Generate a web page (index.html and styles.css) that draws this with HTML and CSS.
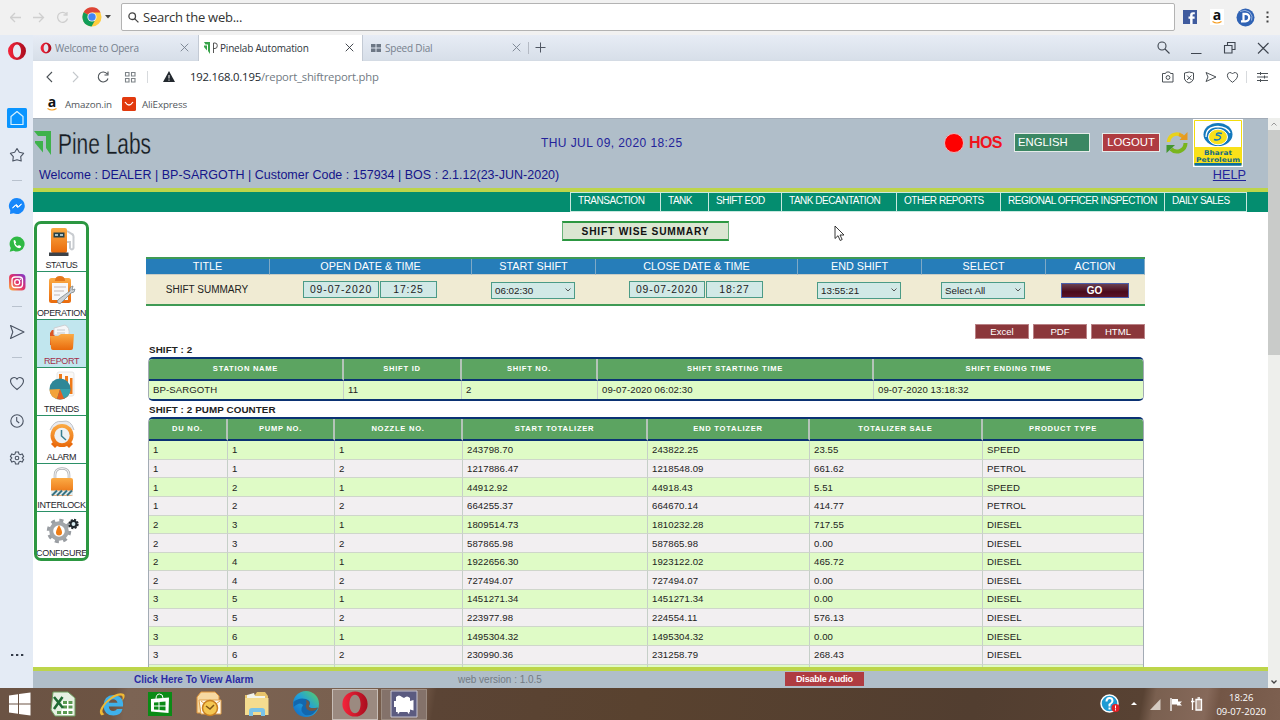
FILE: index.html
```html
<!DOCTYPE html>
<html lang="en">
<head>
    <meta charset="utf-8">
    <title>Pinelab Automation</title>
    <link rel="stylesheet" href="styles.css">
</head>
<body>
    <svg class="defs" width="0" height="0">
        <defs>
            <linearGradient id="orange" x1="0" y1="0" x2="0" y2="1">
                <stop offset="0" stop-color="#fbab45"/><stop offset="1" stop-color="#e96a0c"/>
            </linearGradient>
            <linearGradient id="insta" x1="0" y1="1" x2="1" y2="0">
                <stop offset="0" stop-color="#fdb83c"/><stop offset=".5" stop-color="#e1306c"/><stop offset="1" stop-color="#7a3bd0"/>
            </linearGradient>
            <linearGradient id="edgeGrad" x1="0" y1="1" x2="1" y2="0">
                <stop offset="0" stop-color="#1265c0"/><stop offset=".5" stop-color="#1f9fdc"/><stop offset="1" stop-color="#5fd35f"/>
            </linearGradient>
            <linearGradient id="operaGrad" x1="0" y1="0" x2="1" y2="0">
                <stop offset="0" stop-color="#f5253b"/><stop offset="1" stop-color="#a90d1e"/>
            </linearGradient>
        </defs>
        <symbol id="opera" viewBox="0 0 20 20">
            <path fill="url(#operaGrad)" fill-rule="evenodd" d="M10 1a9 9 0 1 0 0 18a9 9 0 1 0 0-18zM10 3.400c2.400 0 4 3 4 6.600s-1.600 6.600-4 6.600s-4-3-4-6.600s1.600-6.600 4-6.600z"/>
        </symbol>
        <symbol id="close" viewBox="0 0 10 10"><path d="M.8 .8l8.400 8.400M9.200 .8l-8.400 8.400" fill="none" stroke="currentColor"/></symbol>
        <symbol id="heart" viewBox="0 0 20 20"><path d="M10 16.500C6 13.500 3.500 11 3.500 8A3.500 3.500 0 0 1 10 6.300A3.500 3.500 0 0 1 16.500 8C16.500 11 14 13.500 10 16.500z" fill="none" stroke="currentColor" stroke-width="1.100"/></symbol>
        <symbol id="send" viewBox="0 0 20 20"><path d="M3.500 3.500L17 10L3.500 16.500L5.800 10z" fill="none" stroke="currentColor" stroke-width="1.100" stroke-linejoin="round"/></symbol>
    </svg>

    <!-- search bar -->
    <div class="search-bar">
        <svg class="history-icons" width="66" height="17" viewBox="0 0 66 17" fill="none" stroke="#cfcfcf" stroke-width="1.300">
            <path d="M11 8.500H0.500M5 4L.5 8.500L5 13M23 8.500h10.500M29 4l4.500 4.500L29 13M56.800 5.500A5 5 0 1 0 57.500 9.500M57 3v3h-3.500"/>
        </svg>
        <svg class="chrome-icon" width="20" height="20" viewBox="0 0 20 20">
            <circle cx="10" cy="10" r="9.500" fill="#ffcd40"/>
            <path d="M10 10L1.600 5.300A9.600 9.600 0 0 1 18.600 5.500H10z" fill="#dd4437"/>
            <path d="M10 10L1.600 5.300A9.500 9.500 0 0 0 9.500 19.500L13.500 12.500z" fill="#109d58"/>
            <circle cx="10" cy="10" r="4.600" fill="#f5f5f5"/><circle cx="10" cy="10" r="3.700" fill="#4285f4"/>
        </svg>
        <svg class="caret" width="6" height="4" viewBox="0 0 6 4"><path d="M0 0h6L3 3.500z" fill="#444"/></svg>
        <div class="search-box">
            <svg width="11" height="11" viewBox="0 0 11 11" fill="none" stroke="#444" stroke-width="1.300"><circle cx="4.200" cy="4.200" r="3.300"/><path d="M6.600 6.600l3.800 3.800"/></svg>
            <span>Search the web...</span>
        </div>
        <svg class="fb-icon" width="14" height="14" viewBox="0 0 14 14"><path d="M0 0h14v14H0z" fill="#3f5b9e"/><path d="M9.600 14V8.700h2V6.500h-2V5.300c0-.8.300-1.100 1.200-1.100h1V2.200H10C8 2.200 7.100 3.300 7.100 5v1.500H5.500v2.200h1.600V14z" fill="#fff"/></svg>
        <div class="amazon amazon-top">a<svg width="10" height="3" viewBox="0 0 10 3"><path d="M.5 .5Q5 3.500 9.500 .5" fill="none" stroke="#f79c1d" stroke-width="1.100"/></svg></div>
        <svg class="d-icon" width="19" height="19" viewBox="0 0 19 19"><circle cx="9.500" cy="9.500" r="9" fill="#2f62b4"/><path d="M4 3.500Q9 1 13.500 4Q17.500 8 15.500 12.500" fill="none" stroke="#dbe7f8" stroke-width=".6"/><path d="M7.500 5.800h2a3.700 3.700 0 0 1 0 7.500h-2zM5 13.300h4" fill="none" stroke="#fff" stroke-width="2.200"/></svg>
        <svg class="dots-v" width="3" height="12" viewBox="0 0 3 12"><path d="M.5 .5h2v2h-2zM.5 5h2v2h-2zM.5 9.500h2v2h-2z" fill="#444"/></svg>
    </div>

    <div class="opera-window">
        <!-- opera sidebar -->
        <div class="opera-side">
            <svg class="side-opera" viewBox="0 0 20 20"><use href="#opera"/></svg>
            <svg class="side-home" viewBox="0 0 20 20"><rect width="20" height="20" rx="1.500" fill="#0a95ff"/><path d="M4 8.500L10 3.500L16 8.500V16.500H4z" fill="none" stroke="#d8f2ff" stroke-width="1.200" stroke-linejoin="round"/></svg>
            <svg class="side-star" viewBox="0 0 20 20"><path d="M10 3.500L12.300 7.300L16.600 8.300L13.700 11.700L14.200 16L10 14.800L5.800 16L6.300 11.700L3.400 8.300L7.700 7.300z" fill="none" stroke="#4b5463" stroke-width="1.100" stroke-linejoin="round"/></svg>
            <i></i>
            <svg viewBox="0 0 20 20"><path d="M10 2a8 8 0 1 1-3.500 15.300L3 18l.3-3.500A8 8 0 0 1 10 2z" fill="#1687fb"/><path d="M5.500 12l3.500-3.500l2.500 2L14.500 8L11 11.500l-2.500-2z" fill="#fff" stroke="#fff"/></svg>
            <svg class="gap" viewBox="0 0 20 20"><path d="M10.200 2.500a7.500 7.500 0 1 1-3.500 14.200L2.700 17.700L3.800 14A7.500 7.500 0 0 1 10.200 2.500z" fill="#2fb944"/><path d="M6.500 6.500l1.500-.5l1.200 2.500l-1 1q1 2 2.700 2.600l1-1l2.300 1.200q-.2 2-2 2Q7.200 13.800 6.500 6.500z" fill="#fff"/></svg>
            <svg class="gap" viewBox="0 0 20 20"><rect x="2" y="2" width="16.500" height="16.500" rx="4" fill="url(#insta)"/><rect x="5" y="5" width="10.500" height="10.500" rx="3" fill="none" stroke="#fff" stroke-width="1.300"/><circle cx="10.200" cy="10.200" r="2.500" fill="none" stroke="#fff" stroke-width="1.300"/><circle cx="13.300" cy="7.200" r=".7" fill="#fff"/></svg>
            <i class="tight"></i>
            <svg viewBox="0 0 20 20"><use href="#send"/></svg>
            <i></i>
            <svg viewBox="0 0 20 20"><use href="#heart"/></svg>
            <svg class="gap" viewBox="0 0 20 20" fill="none" stroke="currentColor" stroke-width="1.100"><circle cx="10" cy="10" r="6.200"/><path d="M9.700 6v4l2.500 2"/></svg>
            <svg class="gap side-gear" viewBox="0 0 20 20" fill="none" stroke="currentColor" stroke-width="1.100"><path d="M8.500 4h3l.4 1.900l1.400.8l1.900-.7l1.400 2.500L15.200 10l1.400 1.500l-1.400 2.500l-1.900-.7l-1.400.8l-.4 1.900h-3l-.4-1.900l-1.400-.8l-1.900.7l-1.400-2.500L4.800 10L3.400 8.500L4.800 6l1.900.7l1.400-.8z"/><circle cx="10" cy="10" r="1.800"/></svg>
            <svg class="side-more" viewBox="0 0 20 20"><path d="M4 9h2.300v2H4zM9 9h2.300v2H9zM14 9h2.300v2H14z" fill="#333b48"/></svg>
        </div>

        <div class="opera-main">
            <div class="tabs">
                <div class="tab tab-first">
                    <svg width="12" height="12"><use href="#opera"/></svg>
                    <span>Welcome to Opera</span>
                    <svg class="tab-close" width="9" height="9"><use href="#close"/></svg>
                </div>
                <div class="tab tab-active">
                    <svg width="14" height="12" viewBox="0 0 14 12"><path d="M0 0h6v12L4 9V2.500H1.500z" fill="#38a34a"/><path d="M0 3.500h3v5L0 5z" fill="#38a34a"/><path d="M9.500 11V1h1.500q2.300 0 2.300 2.700T11 6.500H9.500" fill="none" stroke="#444" stroke-width=".9"/></svg>
                    <span>Pinelab Automation</span>
                    <svg class="tab-close" width="9" height="9"><use href="#close"/></svg>
                </div>
                <div class="tab tab-speed">
                    <svg width="10" height="8" viewBox="0 0 10 8"><path d="M0 0h4.500v3.500H0zM5.500 0H10v3.500H5.500zM0 4.500h4.500V8H0zM5.500 4.500H10V8H5.500z" fill="#6d7785"/></svg>
                    <span>Speed Dial</span>
                    <svg class="tab-close" width="9" height="9"><use href="#close"/></svg>
                </div>
                <div class="new-tab"><svg width="11" height="11" viewBox="0 0 11 11"><path d="M5.500 .5v10M.5 5.500h10" stroke="#505763"/></svg></div>
                <svg class="window-icons" width="112" height="14" viewBox="0 0 112 14" fill="none" stroke="#3f4650" stroke-width="1.100">
                    <circle cx="5" cy="5" r="4"/><path d="M8 8l4.500 4.500M34 12.500h10.500M70.500 4.500V1.500h7.500v7h-3M67.500 4.500h7.500v7.500h-7.500zM101 2l10.500 10.500M111.500 2L101 12.500"/>
                </svg>
            </div>

            <div class="address">
                <svg class="nav-icons" width="90" height="16" viewBox="0 0 90 16" fill="none" stroke="#4b5156" stroke-width="1.100">
                    <path d="M6 3L1 8l5 5"/><path d="M27 3l5 5l-5 5" stroke="#c4c8cc"/>
                    <path d="M61.300 5A5 5 0 1 0 62 9.500M62 2.500V6h-3.500"/>
                    <path d="M79.500 3.500h3.500v3.500h-3.500zM85.500 3.500h3.500v3.500h-3.500zM79.500 9.500h3.500v3.500h-3.500zM85.500 9.500h3.500v3.500h-3.500z" stroke="#7d8388"/>
                </svg>
                <i class="sep"></i>
                <svg class="warn" width="12" height="11" viewBox="0 0 12 11"><path d="M6 0L12 11H0z" fill="#22282e"/><path d="M6 4v3.500M6 8.500v1.200" stroke="#fff"/></svg>
                <span class="url">192.168.0.195<b>/report_shiftreport.php</b></span>
                <svg class="address-icons" width="78" height="14" viewBox="0 0 78 14" fill="none" stroke="#4b5156">
                    <path d="M.5 3.500h3l1-1.500h3l1 1.500h2.500v8.500H.5z"/><circle cx="6" cy="7.500" r="1.900"/>
                    <path d="M22.500 3q5-2 9 0v6q-1 3-4.500 4q-3.500-1-4.500-4zM25 5.500l4.500 4.500M29.500 5.500L25 10"/>
                    <path d="M44 2.500L54 7L44 11.500L46 7z"/>
                    <path d="M70.500 12.300C67 9.800 65.400 7.800 65.400 5.300A2.700 2.700 0 0 1 70.500 4A2.700 2.700 0 0 1 75.600 5.300C75.600 7.800 74 9.800 70.500 12.300z"/>
                </svg>
                <i class="sep sep-right"></i>
                <svg class="easy-setup" width="11" height="10" viewBox="0 0 11 10" stroke="#4b5156"><path d="M0 1.500h11M0 5h11M0 8.500h11M3.500 0v3M7.500 3.500v3M3.500 7v3"/></svg>
            </div>

            <div class="bookmarks">
                <div class="amazon">a<svg width="10" height="3" viewBox="0 0 10 3"><path d="M.5 .5Q5 3.500 9.500 .5" fill="none" stroke="#f79c1d" stroke-width="1.100"/></svg></div>
                <span>Amazon.in</span>
                <svg class="bm-ali" width="14" height="14" viewBox="0 0 14 14"><rect width="14" height="14" rx="1.500" fill="#e23a0e"/><path d="M3 5Q7 11 11 5" fill="none" stroke="#fff" stroke-width="1.300"/></svg>
                <span>AliExpress</span>
            </div>

            <div class="viewport">
                <div class="page">
                    <div class="header">
                        <div class="header-top">
                            <svg class="logo" width="124" height="40" viewBox="0 0 124 40">
                                <path d="M0 6h17v24l-5-7V11H4z" fill="#3eb24b"/><path d="M1 16h8v11.500L1 18z" fill="#3eb24b"/>
                                <text x="24" y="29" font-family="Liberation Sans" font-size="30" fill="#161c22" stroke="#b0bec9" stroke-width=".3" textLength="93" lengthAdjust="spacingAndGlyphs">Pine Labs</text>
                            </svg>
                            <span class="date">THU JUL 09, 2020 18:25</span>
                            <span class="hos-dot"></span>
                            <span class="hos">HOS</span>
                            <span class="language">ENGLISH</span>
                            <span class="logout">LOGOUT</span>
                            <svg class="refresh" width="22" height="23" viewBox="0 0 22 23" fill="none">
                                <path d="M2.500 11A8.500 8.500 0 0 1 14 3.500" stroke="#e8d21c" stroke-width="3.500"/><path d="M13 3.500a8 8 0 0 1 5 3.500" stroke="#e9a31d" stroke-width="3.500"/><path d="M21.500 1v8h-8z" fill="#e59a22"/>
                                <path d="M19.500 12A8.500 8.500 0 0 1 5 18" stroke="#79b51d" stroke-width="4"/><path d="M.5 22v-8h8.500z" fill="#43962f"/>
                            </svg>
                            <svg class="bp-logo" width="50" height="48" viewBox="0 0 50 48">
                                <path d="M0 0h50v48H0z" fill="#fff"/><path d="M1.500 1.500h47v44h-47z" fill="#fff" stroke="#f2dc0c"/>
                                <path d="M1.500 28h47v16h-47z" fill="#f9e11a"/><path d="M1.500 44h47v2.800h-47z" fill="#0b6f9b"/>
                                <ellipse cx="25" cy="15.500" rx="14.500" ry="11.500" fill="#1479bd"/>
                                <path d="M13 18Q13 8 25 7.500Q34 8 37 14" fill="none" stroke="#fff" stroke-width="1.300"/>
                                <ellipse cx="25" cy="18" rx="9.500" ry="7.800" fill="#f9e11a" stroke="#fff"/>
                                <path d="M29 14.500q-6-1.500-5.500 1.500q4.500 .5 4 3q-1.500 3-6.500 1.500" fill="none" stroke="#1479bd" stroke-width="1.500"/>
                                <text x="11" y="35.500" font-family="DejaVu Sans" font-size="6.500" font-weight="bold" fill="#156a82" textLength="28" lengthAdjust="spacingAndGlyphs">Bharat</text>
                                <text x="3" y="42.700" font-family="DejaVu Sans" font-size="6.500" font-weight="bold" fill="#156a82" textLength="44" lengthAdjust="spacingAndGlyphs">Petroleum</text>
                            </svg>
                        </div>
                        <div class="header-bottom">
                            <span class="welcome">Welcome : DEALER | BP-SARGOTH | Customer Code : 157934 | BOS : 2.1.12(23-JUN-2020)</span>
                            <a class="help">HELP</a>
                        </div>
                    </div>

                    <ul class="menu">
                        <li class="m-trans">TRANSACTION</li>
                        <li class="m-tank">TANK</li>
                        <li class="m-eod">SHIFT EOD</li>
                        <li class="m-dec">TANK DECANTATION</li>
                        <li class="m-other">OTHER REPORTS</li>
                        <li class="m-roi">REGIONAL OFFICER INSPECTION</li>
                        <li class="m-daily">DAILY SALES</li>
                    </ul>

                    <div class="content">
                        <div class="left-menu">
                            <div class="left-item">
                                <svg viewBox="0 0 30 30"><path d="M20 4l5 3q2 1 1.500 5v9q-1.500 3-3.500 0v-6h-3" fill="none" stroke="#c9ccd0" stroke-width="2"/><rect x="4" y="1" width="16" height="25" rx="2" fill="url(#orange)"/><path d="M6.500 5.500h11v5h-11z" fill="#24424a"/><path d="M8 8h3M13 8h3" stroke="#d9edf0" stroke-width="1.500"/><path d="M2 25.500h19.500v3.500H2z" fill="#3c4248"/></svg>
                                <span>STATUS</span>
                            </div>
                            <div class="left-item">
                                <svg viewBox="0 0 30 30"><rect x="2" y="3" width="22" height="25" rx="2.500" fill="url(#orange)"/><path d="M5 8h16v17H5z" fill="#f7f7f9"/><path d="M8 6q0-5 5-5t5 5z" fill="#e5761a"/><path d="M7 12h12M7 16h10M7 20h6" stroke="#c4b7b7"/><path d="M26 11q-4 1-3 5L12 24q-3 2-1 4q2 2 4-1l9-9q4 0 4-4l-3 1z" fill="#cdd1d5" stroke="#7d868c" stroke-width=".8"/></svg>
                                <span>OPERATION</span>
                            </div>
                            <div class="left-item selected">
                                <svg viewBox="0 0 30 30"><path d="M3 10l2-3h3v15H3z" fill="#db5724"/><path d="M7 5l11-3q5 2 4 10H7z" fill="#f5f6f8" stroke="#cdd0d3"/><path d="M10 7h8M10 10h8" stroke="#c4c9cd"/><path d="M3 13h8l3-2h13l-1 14q0 2-2 2H6q-2 0-2-2z" fill="url(#orange)"/></svg>
                                <span>REPORT</span>
                            </div>
                            <div class="left-item">
                                <svg viewBox="0 0 30 30"><rect x="10" y="1" width="17" height="24" rx="2" fill="#faf8f5" stroke="#dcdcdc" stroke-width=".7"/><path d="M12 3h3v10h-3zM18 5h3v13h-3zM23 7h2.500v16H23z" fill="#ef7a19"/><circle cx="13" cy="18" r="10.500" fill="#2f8797"/><path d="M13 18L10 28A10.500 10.500 0 0 1 2.500 18.500z" fill="#f2a33b"/><path d="M13 18L10 28A10.500 10.500 0 0 0 23.500 18z" fill="#e55f20"/><path d="M13 18l4 9.500a10.500 10.500 0 0 0 6.500-9.500z" fill="#37a0ac"/></svg>
                                <span>TRENDS</span>
                            </div>
                            <div class="left-item">
                                <svg viewBox="0 0 30 30"><path d="M3 11Q7 1 15 2.500Q24 0 27 11" fill="#e9eaee" stroke="#bfc3c9"/><path d="M4 25l4-4l4 4l-4 4zM26 25l-4-4l-4 4l4 4z" fill="#e96a0c"/><circle cx="15" cy="16.500" r="11.500" fill="url(#orange)"/><circle cx="15" cy="16.500" r="7.700" fill="#eef1f4"/><path d="M14.500 11v6l4.500 4" fill="none" stroke="#377f91" stroke-width="1.500"/></svg>
                                <span>ALARM</span>
                            </div>
                            <div class="left-item">
                                <svg viewBox="0 0 30 30"><path d="M8 14V8q0-6.500 7-6.500T22 8v6" fill="none" stroke="#adb0b4" stroke-width="2.600"/><path d="M8 14V8q0-6.500 7-6.500T22 8v6" fill="none" stroke="#efefef" stroke-width="1.200"/><rect x="4" y="11" width="22" height="18" rx="2" fill="url(#orange)"/><path d="M4 23.500h22v5H4z" fill="#e5eff0"/><path d="M5 28.500l5-5M10 28.500l5-5M15 28.500l5-5M20 28.500l5-5" stroke="#397382" stroke-width="2"/></svg>
                                <span>INTERLOCK</span>
                            </div>
                            <div class="left-item">
                                <svg class="gear" viewBox="0 0 34 30"><circle cx="14" cy="16" r="10.500" fill="none" stroke="#999da2" stroke-width="3.500" stroke-dasharray="4 4.250"/><circle cx="14" cy="16" r="7.800" fill="#fff" stroke="#a2a6aa" stroke-width="4"/><path d="M14 10q3 5 3 7.500a3 3 0 0 1-6 0Q11 15 14 10z" fill="#ee7d16"/><circle cx="28.500" cy="9" r="4.200" fill="none" stroke="#22282d" stroke-width="2" stroke-dasharray="2 1.300"/><circle cx="28.500" cy="9" r="2.900" fill="#d6eaef" stroke="#22282d" stroke-width="2"/></svg>
                                <span>CONFIGURE</span>
                            </div>
                        </div>

                        <div class="report">
                            <div class="page-title">SHIFT WISE SUMMARY</div>
                            <table class="filter">
                                <colgroup><col class="f1"><col class="f2"><col class="f3"><col class="f4"><col class="f5"><col class="f6"><col class="f7"></colgroup>
                                <tr>
                                    <th>TITLE</th><th>OPEN DATE &amp; TIME</th><th>START SHIFT</th><th>CLOSE DATE &amp; TIME</th><th>END SHIFT</th><th>SELECT</th><th>ACTION</th>
                                </tr>
                                <tr>
                                    <td>SHIFT SUMMARY</td>
                                    <td><div class="pair"><span class="date-input">09-07-2020</span><span class="time-input">17:25</span></div></td>
                                    <td><div class="dropdown">06:02:30<svg width="6" height="4" viewBox="0 0 6 4"><path d="M.5 .5L3 3L5.500 .5" fill="none" stroke="#555"/></svg></div></td>
                                    <td><div class="pair"><span class="date-input">09-07-2020</span><span class="time-input">18:27</span></div></td>
                                    <td><div class="dropdown">13:55:21<svg width="6" height="4" viewBox="0 0 6 4"><path d="M.5 .5L3 3L5.500 .5" fill="none" stroke="#555"/></svg></div></td>
                                    <td><div class="dropdown">Select All<svg width="6" height="4" viewBox="0 0 6 4"><path d="M.5 .5L3 3L5.500 .5" fill="none" stroke="#555"/></svg></div></td>
                                    <td><div class="go">GO</div></td>
                                </tr>
                            </table>

                            <div class="export">
                                <span>Excel</span><span>PDF</span><span>HTML</span>
                            </div>

                            <div class="caption">SHIFT : 2</div>
                            <div class="grid-box grid-shift">
                                <table class="grid">
                                    <colgroup><col class="s1"><col class="s2"><col class="s3"><col class="s4"><col class="s5"></colgroup>
                                    <tr><th>STATION NAME</th><th>SHIFT ID</th><th>SHIFT NO.</th><th>SHIFT STARTING TIME</th><th>SHIFT ENDING TIME</th></tr>
                                    <tr><td>BP-SARGOTH</td><td>11</td><td>2</td><td>09-07-2020 06:02:30</td><td>09-07-2020 13:18:32</td></tr>
                                </table>
                            </div>

                            <div class="caption caption-pump">SHIFT : 2 PUMP COUNTER</div>
                            <div class="grid-box">
                                <table class="grid">
                                    <colgroup><col class="p1"><col class="p2"><col class="p3"><col class="p4"><col class="p5"><col class="p6"><col class="p7"></colgroup>
                                    <tr><th>DU NO.</th><th>PUMP NO.</th><th>NOZZLE NO.</th><th>START TOTALIZER</th><th>END TOTALIZER</th><th>TOTALIZER SALE</th><th>PRODUCT TYPE</th></tr>
                                    <tr><td>1</td><td>1</td><td>1</td><td>243798.70</td><td>243822.25</td><td>23.55</td><td>SPEED</td></tr>
                                    <tr><td>1</td><td>1</td><td>2</td><td>1217886.47</td><td>1218548.09</td><td>661.62</td><td>PETROL</td></tr>
                                    <tr><td>1</td><td>2</td><td>1</td><td>44912.92</td><td>44918.43</td><td>5.51</td><td>SPEED</td></tr>
                                    <tr><td>1</td><td>2</td><td>2</td><td>664255.37</td><td>664670.14</td><td>414.77</td><td>PETROL</td></tr>
                                    <tr><td>2</td><td>3</td><td>1</td><td>1809514.73</td><td>1810232.28</td><td>717.55</td><td>DIESEL</td></tr>
                                    <tr><td>2</td><td>3</td><td>2</td><td>587865.98</td><td>587865.98</td><td>0.00</td><td>DIESEL</td></tr>
                                    <tr><td>2</td><td>4</td><td>1</td><td>1922656.30</td><td>1923122.02</td><td>465.72</td><td>DIESEL</td></tr>
                                    <tr><td>2</td><td>4</td><td>2</td><td>727494.07</td><td>727494.07</td><td>0.00</td><td>DIESEL</td></tr>
                                    <tr><td>3</td><td>5</td><td>1</td><td>1451271.34</td><td>1451271.34</td><td>0.00</td><td>DIESEL</td></tr>
                                    <tr><td>3</td><td>5</td><td>2</td><td>223977.98</td><td>224554.11</td><td>576.13</td><td>DIESEL</td></tr>
                                    <tr><td>3</td><td>6</td><td>1</td><td>1495304.32</td><td>1495304.32</td><td>0.00</td><td>DIESEL</td></tr>
                                    <tr><td>3</td><td>6</td><td>2</td><td>230990.36</td><td>231258.79</td><td>268.43</td><td>DIESEL</td></tr>
                                    <tr><td></td><td></td><td></td><td></td><td></td><td></td><td></td></tr>
                                </table>
                            </div>
                        </div>
                    </div>

                    <div class="footer">
                        <span class="alarm-link">Click Here To View Alarm</span>
                        <span class="version">web version : 1.0.5</span>
                        <span class="audio">Disable Audio</span>
                    </div>
                </div>
                <div class="scrollbar">
                    <svg width="6" height="4" viewBox="0 0 6 4"><path d="M.5 3.500L3 1L5.500 3.500" fill="none" stroke="#999"/></svg>
                    <div class="thumb"></div>
                    <svg class="down" width="6" height="4" viewBox="0 0 6 4"><path d="M.5 .5L3 3L5.500 .5" fill="none" stroke="#444" stroke-width="1.300"/></svg>
                </div>
            </div>
        </div>
    </div>

    <!-- windows taskbar -->
    <div class="taskbar">
        <svg class="task" width="30" height="30" viewBox="0 0 30 30"><path d="M4 6.500l9-1.300v9.300H4zM14 5l11.500-1.600v11.100H14zM4 15.500h9v9.300l-9-1.300zM14 15.500h11.500v11.100L14 25z" fill="#fff"/></svg>
        <svg class="task" width="30" height="30" viewBox="0 0 30 30"><path d="M5 3h15l7 6v18H7l-4-6z" fill="#e6f0e2" stroke="#6b9c5d"/><path d="M14 12h11v14H14z" fill="#fff"/><path d="M15 12h4v3h-4zM20.500 12h4v3h-4zM15 16.500h4v3h-4zM20.500 16.500h4v3h-4zM9 22h4v3H9zM15 22h4v3h-4zM20.500 22h4v3h-4z" fill="#5a9a52"/><path d="M6 8l9 11M14.500 8L6 20" stroke="#1f6b34" stroke-width="2.600"/></svg>
        <svg class="task" width="30" height="30" viewBox="0 0 30 30"><path d="M8.500 17.500h17.500q1-11-9.500-11.500Q7 6.500 6.500 16.500Q7 26.500 16.500 26.500Q24 26.500 25.500 20h-5.500q-1.200 2-3.700 2q-4 0-4.500-4.500z" fill="#3fb1ea"/><path d="M11.800 13.800q1-3.500 4.400-3.500t4.300 3.500z" fill="#715847"/><path d="M4 26Q0 21 10 11.500T27 5Q29 8 25 12Q28 4 19 7.500Q8 13 5.500 21Q5 24 7.500 25Q5 27 4 26z" fill="#f0b934"/></svg>
        <svg class="task" width="30" height="30" viewBox="0 0 30 30"><path d="M3 3h24v24H3z" fill="#0b8b16"/><path d="M6 10l18-1.500-.5 15.500L6 22.500z" fill="#fff"/><path d="M11 10Q11 5 14.500 5T18 9" fill="none" stroke="#fff"/><path d="M9 13.500l4.500-.3v3.300H9zM14.500 13l6-.5v4h-6zM9 17.500h4.500v3.300L9 20.500zM14.500 17.500h6v4l-6-.5z" fill="#0b8b16"/></svg>
        <svg class="task" width="30" height="30" viewBox="0 0 30 30"><path d="M3 8l4-5h14l4 4v17H3z" fill="#f6d9a2" stroke="#df9438"/><path d="M5 11h22v14H7z" fill="#fffaf0" stroke="#e0a04a"/><path d="M7 12l9 7l10-7" fill="none" stroke="#e0a04a"/><circle cx="16" cy="19" r="7.500" fill="#f5c752" stroke="#c97f20" stroke-width="1.500"/><path d="M12 17l4 3l4-4" fill="none" stroke="#7d5519" stroke-width="1.500"/></svg>
        <svg class="task" width="30" height="30" viewBox="0 0 30 30"><path d="M3 6h10l2-3h8l3 4v19H3z" fill="#e7c36b"/><path d="M5 6l7-2l1 3h10v4H5z" fill="#f3f4e9"/><path d="M3 9h23.500v17H3z" fill="#f4dc8f"/><path d="M7 27v-5q0-3 3-3h10q3 0 3 3v5h-4v-4h-8v4z" fill="#79c3e8"/></svg>
        <svg class="task" width="30" height="30" viewBox="0 0 30 30"><circle cx="15" cy="15" r="13" fill="url(#edgeGrad)"/><path d="M2.500 13Q8 8 15 10Q21 12 18 17Q17 20 27 19Q22 28 14 26Q8 22 12 16Q9 12 2.500 18z" fill="#1367ad"/><path d="M15 11q5 1 3 6q-.5 3 9 1.500l-2 2.500q-9 3-10.500-4q2-3 .5-6z" fill="#715847"/></svg>
        <div class="task-button"><svg width="28" height="28"><use href="#opera"/></svg></div>
        <div class="task-button recorder"><svg width="28" height="28" viewBox="0 0 28 28"><path d="M1 1h26v26H1z" fill="#5b5b80" stroke="#c7c5d0"/><path d="M6 7q3-3 6 0l2 1q3-3 6 0v14H6zM20 11l3.500-1v10.500L20 19.500zM4 11h2v6H4z" fill="#fff"/><path d="M9 21.500l-1 2M18 21.500l1 2" stroke="#fff" stroke-width="1.500"/></svg></div>
        <svg class="tray-help" width="20" height="20" viewBox="0 0 20 20"><circle cx="9.500" cy="9.500" r="8.500" fill="#1e9bd4" stroke="#fff" stroke-width="1.500"/><path d="M6.500 7.500q0-3.500 3-3.500t3 3q0 1.500-3 3.500v2M9.500 13.500v2" fill="none" stroke="#fff" stroke-width="2"/><circle cx="15.500" cy="14" r="4" fill="#e21e24"/><path d="M15.500 11.500v3M15.500 15.200v1.300" stroke="#fff"/></svg>
        <svg class="tray-icons" width="72" height="16" viewBox="0 0 72 16"><path d="M0 9h6L3 6z" fill="#fff"/><path d="M19 14L29.500 3v11z" fill="#d5cbc2"/><path d="M40 2v13" stroke="#fff" stroke-width="1.300"/><path d="M41 3h6v2.500h4l-2 2l2 2h-5V8.500H41z" fill="#fff"/><path d="M65 3.500h5.500v10.500H65z" fill="#b7a398" stroke="#fff" stroke-width="1.300"/><path d="M66.500 2h2.500M61.500 2v3M60 5.500h3.500M61.500 6v8" stroke="#fff" stroke-width="1.300"/></svg>
        <div class="clock"><span>18:26</span><span>09-07-2020</span></div>
    </div>

    <svg class="cursor" width="11" height="17" viewBox="0 0 11 17"><path d="M1 1v12.500l3-2.800l2.200 4.800l2-1l-2.200-4.500H10z" fill="#fff" stroke="#222" stroke-width=".9"/></svg>
</body>
</html>
```

FILE: styles.css
```css
* {
    box-sizing: border-box;
}

body {
    margin: 0;
    width: 1280px;
    height: 720px;
    overflow: hidden;
    display: flex;
    flex-direction: column;
    background: #fff;
    font-family: "Liberation Sans", Arial, sans-serif;
}

svg {
    flex: none;
    display: block;
}

.defs {
    position: absolute;
}

/* search bar */
.search-bar {
    height: 35px;
    padding-bottom: 1px;
    display: flex;
    align-items: center;
    background: #f1f1f1;
    font-family: "Open Sans", "Noto Sans", sans-serif;
}

.history-icons {
    margin-left: 10px;
}

.chrome-icon {
    margin-left: 6px;
}

.caret {
    margin-left: 3px;
}

.search-box {
    width: 1054px;
    height: 28px;
    margin-left: 10px;
    padding-left: 6px;
    display: flex;
    align-items: center;
    gap: 4px;
    background: #fff;
    border: 1px solid #b3b3b3;
    border-radius: 2px;
    font-size: 13px;
    letter-spacing: -0.25px;
    color: #333;
}

.fb-icon {
    margin-left: 8px;
}

.amazon {
    width: 14px;
    height: 16px;
    margin-left: 12px;
    display: flex;
    flex-direction: column;
    align-items: center;
    font-family: "Open Sans", sans-serif;
    font-size: 14px;
    font-weight: bold;
    line-height: 12px;
    color: #111;
}

.amazon-top {
    margin-left: 13px;
    background: #fff;
}

.d-icon {
    margin-left: 12px;
}

.dots-v {
    margin-left: 11px;
}

/* opera window */
.opera-window {
    height: 653px;
    display: flex;
}

.opera-side {
    width: 33px;
    padding: 6px 0 23px;
    display: flex;
    flex-direction: column;
    align-items: center;
    background: #e4ebf5;
    color: #4b5463;
}

.opera-side svg {
    width: 20px;
    height: 20px;
}

.opera-side i {
    width: 10px;
    height: 1px;
    margin: 15px 0;
    background: #b9c2ce;
}

.opera-side .tight {
    margin-top: 14px;
}

.opera-side .side-home {
    margin-top: 47px;
}

.opera-side .side-star {
    margin-top: 17px;
}

.opera-side .gap {
    margin-top: 18px;
}

.opera-side .side-gear {
    margin-top: 17px;
}

.opera-side .side-more {
    margin-top: auto;
}

.opera-main {
    flex: 1;
    display: flex;
    flex-direction: column;
    font-family: "Open Sans", "Noto Sans", sans-serif;
}

.tabs {
    height: 26px;
    display: flex;
    align-items: center;
    background: linear-gradient(#e7ecf5, #d7dfe9);
    border-bottom: 1px solid #d4dbe4;
}

.tab {
    height: 26px;
    display: flex;
    align-items: center;
    font-size: 10px;
    letter-spacing: -0.2px;
    color: #76808d;
}

.tab-close {
    margin-left: auto;
}

.tab-first {
    width: 166px;
    padding: 0 9px 0 7px;
    gap: 3px;
    border-right: 1px solid #c3cad4;
}

.tab-active {
    width: 164px;
    padding: 0 8px 0 5px;
    gap: 2px;
    background: #fff;
    border-right: 1px solid #c3cad4;
    color: #30363d;
}

.tab-speed {
    width: 158px;
    padding: 0 0 0 8px;
    gap: 4px;
}

.new-tab {
    height: 12px;
    margin-left: 7px;
    padding-left: 6px;
    border-left: 1px solid #b4bac4;
}

.window-icons {
    margin-left: auto;
    margin-right: 11px;
}

.address {
    height: 31px;
    display: flex;
    align-items: center;
}

.nav-icons {
    margin-left: 13px;
}

.sep {
    width: 1px;
    height: 12px;
    margin-left: 11px;
    background: #d7dadd;
}

.warn {
    margin-left: 15px;
}

.url {
    margin-left: 15px;
    font-size: 11.3px;
    letter-spacing: -0.2px;
    color: #22282e;
}

.url b {
    font-weight: normal;
    color: #717a83;
}

.address-icons {
    margin-left: auto;
}

.address .sep-right {
    margin-left: 6px;
}

.easy-setup {
    margin-left: 10px;
    margin-right: 12px;
}

.bookmarks {
    height: 26px;
    padding-bottom: 2px;
    display: flex;
    align-items: center;
    font-size: 9.8px;
    letter-spacing: -0.15px;
    color: #51565c;
}

.bookmarks span {
    margin-left: 6px;
}

.bm-ali {
    margin-left: 10px;
}

/* page */
.viewport {
    height: 570px;
    display: flex;
    font-family: "Liberation Sans", Arial, sans-serif;
}

.page {
    width: 1235px;
    display: flex;
    flex-direction: column;
}

.header {
    height: 70px;
    background: #b0bec9;
    border-top: 1px solid #a3acb8;
}

.header-top {
    height: 48px;
    display: flex;
    align-items: center;
}

.logo {
    margin-left: 1px;
    margin-top: 4px;
}

.date {
    width: 160px;
    margin-left: 383px;
    font-size: 12px;
    letter-spacing: 0.42px;
    white-space: nowrap;
    color: #23239a;
}

.hos-dot {
    width: 20px;
    height: 20px;
    margin-left: 243px;
    border-radius: 50%;
    border: 1px solid #ecb6bc;
    background: #fe0000;
}

.hos {
    width: 45px;
    margin-left: 5px;
    font-size: 16px;
    font-weight: bold;
    letter-spacing: -0.6px;
    color: #f0131c;
}

.language,
.logout {
    height: 19px;
    border: 1px solid #e6ece9;
    font-size: 11.3px;
    line-height: 17px;
    color: #fff;
}

.language {
    width: 76px;
    padding-left: 3px;
    background: #3b8763;
}

.logout {
    width: 58px;
    margin-left: 12px;
    text-align: center;
    background: #af3c41;
}

.date,
.hos-dot,
.hos,
.language,
.logout,
.refresh {
    margin-bottom: 1px;
}

.refresh {
    margin-left: 6px;
}

.bp-logo {
    margin-left: 5px;
}

.header-bottom {
    display: flex;
    justify-content: space-between;
    padding: 0 22px 0 6px;
    line-height: 16px;
}

.welcome {
    font-size: 12.5px;
    letter-spacing: 0.01px;
    color: #15158a;
}

.help {
    font-size: 12.7px;
    text-decoration: underline;
    color: #23239a;
}

.menu {
    height: 24px;
    margin: 0;
    padding: 0 21px 0 0;
    display: flex;
    justify-content: flex-end;
    list-style: none;
    background: #048d6f;
    border-top: 4px solid #bdd54a;
}

.menu li {
    padding-left: 7px;
    border: 1px solid #c9e8df;
    border-right: none;
    font-size: 10px;
    letter-spacing: -0.48px;
    line-height: 16px;
    white-space: nowrap;
    color: #fff;
}

.menu .m-trans { width: 90px; }
.menu .m-tank { width: 48px; }
.menu .m-eod { width: 73px; }
.menu .m-dec { width: 115px; }
.menu .m-other { width: 104px; }
.menu .m-roi { width: 164px; }
.menu .m-daily {
    width: 83px;
    border-right: 1px solid #c9e8df;
}

.content {
    height: 455px;
    display: flex;
    overflow: hidden;
    background: #fff;
}

.left-menu {
    width: 55px;
    height: 340px;
    margin: 9px 0 0 1px;
    flex: none;
    border: 3px solid #2c9741;
    border-radius: 7px;
    overflow: hidden;
}

.left-item {
    height: 48px;
    display: flex;
    flex-direction: column;
    align-items: center;
    justify-content: space-between;
    padding-top: 3px;
    border-bottom: 1px solid #2b9067;
    font-size: 9px;
    letter-spacing: -0.35px;
    line-height: 12px;
    color: #26262c;
}

.left-item svg {
    width: 30px;
    height: 30px;
}

.left-item .gear {
    width: 34px;
}

.left-item.selected {
    background: #c1e6ee;
    color: #a3304a;
}

.report {
    width: 998px;
    margin-left: 57px;
    padding-top: 9px;
}

.page-title {
    width: 167px;
    height: 20px;
    margin-left: 416px;
    border: 1px solid #6ab27a;
    border-top: 2px solid #2c9741;
    border-bottom: 2px solid #2c9741;
    background: #dbe6d2;
    font-size: 10.2px;
    font-weight: bold;
    line-height: 18px;
    letter-spacing: 0.8px;
    text-align: center;
    color: #111;
}

.filter {
    width: 999px;
    margin-top: 16px;
    table-layout: fixed;
    border-collapse: separate;
    border-spacing: 0;
    background: #f0ebd3;
    border-top: 2px solid #3f9a55;
    border-bottom: 2px solid #3f9a55;
}

.filter th,
.filter td {
    padding: 0;
}

.filter th {
    height: 16px;
    background: #267db9;
    border-right: 1px solid #7fa9c6;
    border-bottom: 1px solid #c9cdc6;
    font-size: 10.8px;
    font-weight: normal;
    line-height: 15px;
    color: #fff;
}

.filter td {
    height: 29px;
    padding-right: 2px;
    font-size: 10px;
    text-align: center;
    color: #222;
}

.f1 { width: 124px; }
.f2 { width: 202px; }
.f3 { width: 124px; }
.f4 { width: 202px; }
.f5 { width: 124px; }
.f6 { width: 124px; }
.f7 { width: 99px; }

.pair {
    display: flex;
    justify-content: center;
    gap: 1px;
}

.date-input,
.time-input {
    height: 17px;
    border: 1px solid #4b9b86;
    background: #d1e9e6;
    font-size: 10.4px;
    line-height: 16px;
    letter-spacing: 0.9px;
}

.date-input {
    width: 76px;
}

.time-input {
    width: 57px;
}

.dropdown {
    width: 84px;
    height: 17px;
    margin: 1px auto 0;
    padding: 0 3px 0 3px;
    display: flex;
    align-items: center;
    justify-content: space-between;
    border: 1px solid #4b9b86;
    background: #d1e9e6;
    font-size: 9.8px;
}

.go {
    width: 68px;
    height: 15px;
    margin: 1px auto 0;
    border: 1px solid #4a5fae;
    background: linear-gradient(#6b4050, #4a0a1c 60%, #5a1428);
    font-weight: bold;
    line-height: 13px;
    color: #fff;
}

.export {
    margin-top: 18px;
    margin-right: -1px;
    display: flex;
    justify-content: flex-end;
    gap: 4px;
}

.export span {
    width: 54px;
    height: 15px;
    border: 1px solid #b98185;
    background: #8b373b;
    font-size: 9.6px;
    line-height: 13px;
    text-align: center;
    color: #fff;
}

.caption {
    height: 13px;
    margin: 4px 0 0 3px;
    font-size: 9.8px;
    font-weight: bold;
    line-height: 13px;
    letter-spacing: 0.1px;
    color: #222;
}

.caption-pump {
    margin-top: 2px;
}

.grid-box {
    width: 996px;
    margin-left: 2px;
    margin-top: 1px;
    border-top: 2px solid #0b3273;
    border-left: 1px solid #a3abb5;
    border-right: 1px solid #a3abb5;
    border-radius: 5px;
    overflow: hidden;
}

.grid-shift {
    height: 44px;
    border-bottom: 2px solid #0b3273;
}

.grid {
    width: 994px;
    table-layout: fixed;
    border-collapse: separate;
    border-spacing: 0;
}

.grid th {
    height: 22px;
    padding: 0;
    background: #5ca461;
    border-right: 2px solid #b5c4b8;
    border-bottom: 2px solid #0b3273;
    font-size: 7.6px;
    line-height: 18px;
    letter-spacing: 0.72px;
    color: #fff;
}

.grid td {
    height: 18.65px;
    padding: 0 0 0 4px;
    border-right: 1px solid #c6cfc8;
    border-bottom: 1px solid #cfd6cb;
    background: #dffbc6;
    font-size: 9.6px;
    line-height: 17px;
    letter-spacing: 0.08px;
    color: #222;
}

.grid tr:nth-child(odd) td {
    background: #f2eff1;
}

.grid th:last-child,
.grid td:last-child {
    border-right: none;
}

.s1 { width: 195px; }
.s2 { width: 118px; }
.s3 { width: 136px; }
.s4 { width: 276px; }
.s5 { width: 269px; }

.p1 { width: 79px; }
.p2 { width: 107px; }
.p3 { width: 128px; }
.p4 { width: 185px; }
.p5 { width: 162px; }
.p6 { width: 173px; }
.p7 { width: 160px; }

.footer {
    height: 21px;
    display: flex;
    align-items: center;
    background: #b0bec9;
    border-top: 4px solid #bdd54a;
}

.alarm-link {
    width: 324px;
    padding-left: 101px;
    font-size: 10px;
    font-weight: bold;
    white-space: nowrap;
    color: #2b2ba5;
    box-sizing: content-box;
}

.version {
    width: 327px;
    font-size: 10px;
    color: #737b83;
}

.audio {
    width: 79px;
    height: 14px;
    margin-bottom: 2px;
    background: #af3c41;
    font-size: 9px;
    font-weight: bold;
    line-height: 14px;
    letter-spacing: -0.22px;
    text-align: center;
    color: #fff;
}

.scrollbar {
    width: 12px;
    height: 570px;
    padding: 4px 0;
    display: flex;
    flex-direction: column;
    align-items: center;
    background: #eeefec;
}

.thumb {
    width: 12px;
    height: 225px;
    margin-top: 4px;
    background: #c9cbc9;
}

.scrollbar .down {
    margin-top: auto;
}

/* taskbar */
.taskbar {
    height: 32px;
    padding-left: 5px;
    display: flex;
    align-items: center;
    background: linear-gradient(100deg, #6b5344 0, #6d5443 9%, #7c6454 10%, #79604f 27%, #715746 33%, #5b4435 34%, #59422f 50%, #523e30 76%, #584233 89%, #7a6050 90%, #86695a 94%, #735646 95%, #7d6050 100%);
    font-family: "Open Sans", "Noto Sans", sans-serif;
}

.task {
    margin-right: 18.5px;
}

.task:first-child {
    margin-right: 13px;
}

.task-button {
    width: 46px;
    height: 31px;
    margin-left: -7px;
    display: flex;
    align-items: center;
    justify-content: center;
    border: 1px solid #c7bdb6;
    background: #9b8a80;
}

.task-button.recorder {
    margin-left: 3px;
    border-color: #9c8c81;
    background: #84726a;
}

.tray-help {
    margin-left: auto;
}

.tray-icons {
    margin-left: 11px;
}

.clock {
    margin: 2px 14px 0 13px;
    display: flex;
    flex-direction: column;
    align-items: center;
    font-size: 9.5px;
    line-height: 14px;
    color: #fff;
}

.cursor {
    position: absolute;
    left: 834px;
    top: 225px;
}
```
